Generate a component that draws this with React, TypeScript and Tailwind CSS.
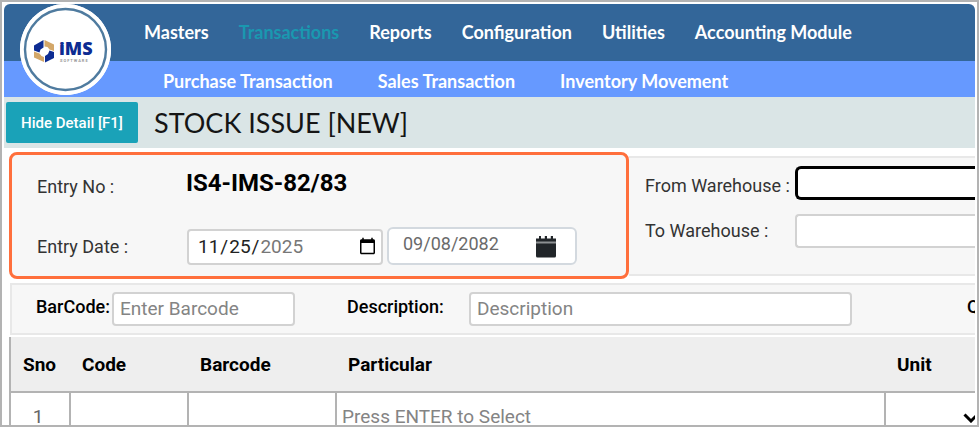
import { useState } from "react";

const menus = [
  { title: "Masters", active: false },
  { title: "Transactions", active: true },
  { title: "Reports", active: false },
  { title: "Configuration", active: false },
  { title: "Utilities", active: false },
  { title: "Accounting Module", active: false },
];

const subMenus = ["Purchase Transaction", "Sales Transaction", "Inventory Movement"];

const columns = [
  { title: "Sno", width: "w-[60px]" },
  { title: "Code", width: "w-[118px]" },
  { title: "Barcode", width: "w-[148px]" },
  { title: "Particular", width: "w-auto" },
  { title: "Unit", width: "w-[100px]" },
];

const inputBase =
  "h-[34px] px-1.5 pb-0.5 bg-white border-2 border-[#d2d2d2] rounded-sm outline-none text-[19px] font-normal placeholder:text-[#848484]";

function Logo() {
  return (
    <a href="#home" aria-label="iMS Software" className="absolute left-4 top-0 z-10 w-[91px] h-[91px] rounded-full bg-white">
      <svg viewBox="0 0 91 91" className="w-full h-full">
        <circle cx="45.5" cy="45.5" r="45.5" fill="#fff" />
        <circle cx="45.5" cy="45.5" r="40.5" fill="none" stroke="#4f7b9f" strokeWidth="2.4" />
        <path d="M14 41.5 L23.5 36 L23.5 43.5 L20.5 45.5 L19.5 48.5 L14 46.5 Z" fill="#0d2c92" />
        <path d="M24.5 36 L34 40.5 L34 47 L29.5 45.5 L27.5 43 L24.5 42.5 Z" fill="#d3a769" />
        <path d="M14 47.5 L19.5 49.5 L21.5 52 L24 53 L24 58 L14 53.5 Z" fill="#d3a769" />
        <path d="M34 48 L34 54 L25 58.5 L25 52 L28 50 L29.5 46.5 Z" fill="#0d2c92" />
        <text x="39" y="51" fontFamily="Open Sans, sans-serif" fontWeight="800" fontSize="18" fill="#0d2c92">
          iMS
        </text>
        <text x="40" y="58" fontFamily="Roboto, sans-serif" fontSize="4" fill="#9a9a9a">
          S O F T W A R E
        </text>
      </svg>
    </a>
  );
}

function CalendarIcon() {
  return (
    <svg viewBox="0 0 20 23" className="w-5 h-[23px]" fill="#212529">
      <path d="M0 3.5 H3 V1 H5 V3.5 H8.8 V1 H11 V3.5 H14.8 V1 H17 V3.5 H20 V7 H0 Z" />
      <path d="M0 6.5 H20 V9 H0 Z" fill="#8d9093" />
      <path d="M0 8.5 H20 V21 Q20 22.5 18.5 22.5 H1.5 Q0 22.5 0 21 Z" />
    </svg>
  );
}

function Header() {
  return (
    <header className="relative font-[Lato,sans-serif] font-bold text-lg text-white whitespace-nowrap">
      <Logo />
      <nav className="h-[57px] pl-[140px] pb-0.5 flex items-center gap-[30px] bg-[#336699] rounded-t-md">
        {menus.map((menu) => (
          <a key={menu.title} href="#menu" className={menu.active ? "text-[#1a98b0]" : "text-white"}>
            {menu.title}
          </a>
        ))}
      </nav>
      <nav className="h-9 pl-[159px] pt-1 flex items-center gap-[45px] bg-[#6699ff]">
        {subMenus.map((title) => (
          <a key={title} href="#submenu">
            {title}
          </a>
        ))}
      </nav>
    </header>
  );
}

function EntryDetail() {
  const [date, setDate] = useState("2025-11-25");
  const [miti, setMiti] = useState("09/08/2082");

  return (
    <section className="mt-1 ml-[5px] grid grid-cols-[620px_1fr] items-center">
      <div className="h-[127px] pl-[25px] pt-3 border-3 border-[#ff6f3c] rounded-lg bg-[#f7f7f7]">
        <div className="flex items-start h-9">
          <span className="w-[149px] pt-1.5">Entry No :</span>
          <span className="text-2xl font-bold text-black">IS4-IMS-82/83</span>
        </div>
        <div className="mt-6 flex items-center">
          <label htmlFor="entry-date" className="w-[150px] pt-0.5">
            Entry Date :
          </label>
          <div className="flex items-end gap-1">
            <input
              id="entry-date"
              type="date"
              value={date}
              onChange={(e) => setDate(e.target.value)}
              className="w-[196px] h-9 pl-2 pr-0.5 bg-white border-2 border-[#d2d2d2] rounded-sm outline-none text-[19px] text-[#222] [&::-webkit-datetime-edit-year-field]:text-[#777]"
            />
            <div className="w-[190px] h-[38px] flex items-center justify-between pl-3.5 pr-[19px] bg-white border-2 border-[#d3d9df] rounded-md">
              <input
                aria-label="Miti"
                value={miti}
                onChange={(e) => setMiti(e.target.value)}
                className="w-[110px] pb-1 text-lg text-[#6a6a6a] outline-none"
              />
              <button aria-label="Open calendar">
                <CalendarIcon />
              </button>
            </div>
          </div>
        </div>
      </div>
      <div className="min-w-0 h-[120px] pl-4 pt-2 flex flex-col gap-3.5 bg-[#f7f7f7] border-y-2 border-[#e8e8e8]">
        <div className="flex">
          <label htmlFor="from-wh" className="w-[150px] shrink-0 pt-1.5">
            From Warehouse :
          </label>
          <input id="from-wh" className="grow min-w-0 h-[34px] bg-white border-3 border-r-0 border-black rounded-l-md outline-none" />
        </div>
        <div className="flex items-center">
          <label htmlFor="to-wh" className="w-[150px] shrink-0">
            To Warehouse :
          </label>
          <input id="to-wh" className="grow min-w-0 h-[34px] bg-white border-2 border-r-0 border-[#d2d2d2] rounded-l-sm outline-none" />
        </div>
      </div>
    </section>
  );
}

function ItemFilter() {
  return (
    <section className="mt-1 ml-1.5 h-[52px] pl-6 flex items-center bg-[#f7f7f7] border-2 border-r-0 border-[#e8e8e8] font-medium text-black whitespace-nowrap overflow-hidden">
      <label htmlFor="barcode" className="w-[76px] shrink-0 pb-1">
        BarCode:
      </label>
      <input id="barcode" placeholder="Enter Barcode" className={`w-[183px] shrink-0 ${inputBase}`} />
      <label htmlFor="description" className="ml-[52px] w-[122px] shrink-0 pb-1">
        Description:
      </label>
      <input id="description" placeholder="Description" className={`grow ${inputBase}`} />
      <span className="ml-[115px] w-2 shrink-0 pb-1">Quantity:</span>
    </section>
  );
}

function ItemTable() {
  return (
    <div className="mt-0.5 ml-[5px] overflow-hidden text-[19px]">
      <table className="w-[calc(100%+10px)] table-fixed border-collapse">
        <thead>
          <tr className="h-[55px] bg-[#eeeeee] border-l-2 border-b-2 border-[#b3b3b3]">
            {columns.map((col) => (
              <th key={col.title} className={`${col.width} pl-3 pt-0.5 text-left font-bold text-black`}>
                {col.title}
              </th>
            ))}
          </tr>
        </thead>
        <tbody>
          <tr className="h-12 [&>td]:border-l-2 [&>td]:border-[#b3b3b3]">
            <td className="pr-1 text-center text-[#666]">1</td>
            <td />
            <td />
            <td>
              <input aria-label="Particular" placeholder="Press ENTER to Select" className="w-full px-[5px] outline-none placeholder:text-[#848484]" />
            </td>
            <td className="relative">
              <select aria-label="Unit" className="w-full h-9 appearance-none outline-none" />
              <svg viewBox="0 0 16 10" className="absolute right-1.5 top-5 w-4 h-2.5 pointer-events-none" fill="none" stroke="#000" strokeWidth="3">
                <path d="M1.5 1.5 L8 8 L14.5 1.5" />
              </svg>
            </td>
          </tr>
        </tbody>
      </table>
    </div>
  );
}

export default function App() {
  return (
    <div className="h-screen overflow-hidden bg-white border-2 border-[#b3b3b3] pl-0.5 pr-0.5 pt-0.5 font-[Roboto,sans-serif] text-lg text-[#333]">
      <Header />
      <div className="h-[51px] pl-0.5 flex items-center gap-4 bg-[#dae5e6]">
        <button className="w-[132px] h-[41px] pt-0.5 rounded-xs bg-[#1aa2b8] text-white text-[15px] font-medium">
          Hide Detail [F1]
        </button>
        <h1 className="font-[Lato,sans-serif] text-[27px] text-[#151515]">STOCK ISSUE [NEW]</h1>
      </div>
      <EntryDetail />
      <ItemFilter />
      <ItemTable />
    </div>
  );
}
